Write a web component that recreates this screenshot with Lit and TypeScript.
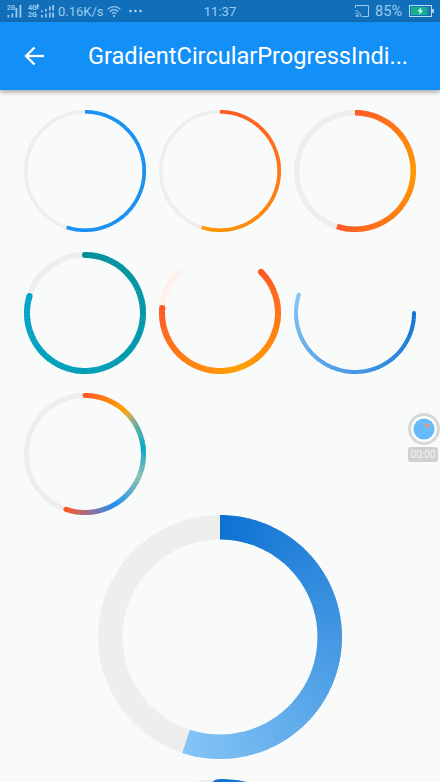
import { LitElement, html, css, svg } from "lit";
import { customElement, property } from "lit/decorators.js";

type Stop = [number, string];

function rgb(hex: string): number[] {
  return [1, 3, 5].map((i) => parseInt(hex.slice(i, i + 2), 16));
}

function colorAt(stops: Stop[], angle: number): string {
  if (stops.length === 1) return stops[0][1];
  for (let i = 1; i < stops.length; i++) {
    if (angle <= stops[i][0]) {
      const [a0, c0] = stops[i - 1];
      const [a1, c1] = stops[i];
      const t = a1 === a0 ? 0 : Math.max(0, (angle - a0) / (a1 - a0));
      const p = rgb(c0);
      const q = rgb(c1);
      return `rgb(${p.map((v, k) => Math.round(v + (q[k] - v) * t)).join(",")})`;
    }
  }
  return stops[stops.length - 1][1];
}

function point(c: number, r: number, deg: number): string {
  const a = (deg * Math.PI) / 180;
  return `${(c + r * Math.sin(a)).toFixed(3)} ${(c - r * Math.cos(a)).toFixed(3)}`;
}

function arc(c: number, r: number, a: number, b: number): string {
  const large = b - a > 180 ? 1 : 0;
  return `M${point(c, r, a)}A${r} ${r} 0 ${large} 1 ${point(c, r, b)}`;
}

@customElement("gradient-ring")
export class GradientRing extends LitElement {
  static styles = css`
    :host {
      display: block;
      flex: none;
    }
    svg {
      display: block;
    }
  `;

  @property({ type: Number }) size = 122;
  @property({ type: Number }) stroke = 4;
  @property({ type: Number }) from = 0;
  @property({ type: Number }) to = 198;
  @property({ type: Number }) trackFrom = 0;
  @property({ type: Number }) trackTo = 360;
  @property() trackColor = "#eeefed";
  @property({ type: Boolean }) round = false;
  @property({ attribute: false }) stops: Stop[] = [[0, "#1e90f0"]];

  render() {
    const c = this.size / 2;
    const r = c - this.stroke / 2;
    const step = 1.5;
    const segs = [];
    for (let a = this.from; a < this.to; a += step) {
      const b = Math.min(a + step + 0.4, this.to);
      segs.push(
        svg`<path d=${arc(c, r, a, b)} stroke=${colorAt(this.stops, a + step / 2)} />`
      );
    }
    const cap = this.round ? "round" : "butt";
    const full = this.trackTo - this.trackFrom >= 360;
    return html`<svg
      width=${this.size}
      height=${this.size}
      viewBox="0 0 ${this.size} ${this.size}"
      fill="none"
      stroke-width=${this.stroke}
    >
      ${full
        ? svg`<circle cx=${c} cy=${c} r=${r} stroke=${this.trackColor} />`
        : this.trackColor === "none"
          ? null
          : svg`<path d=${arc(c, r, this.trackFrom, this.trackTo)} stroke=${this.trackColor} stroke-linecap=${cap} />`}
      ${this.round
        ? svg`
            <path d=${arc(c, r, this.from, this.from + 0.5)} stroke=${colorAt(this.stops, this.from)} stroke-linecap="round" />
            <path d=${arc(c, r, this.to - 0.5, this.to)} stroke=${colorAt(this.stops, this.to)} stroke-linecap="round" />`
        : null}
      ${segs}
    </svg>`;
  }
}

const BLUE: Stop[] = [
  [0, "#1890f2"],
  [198, "#1890f2"],
];
const RED_ORANGE: Stop[] = [
  [0, "#ff5722"],
  [198, "#ff9800"],
];
const RED_ORANGE_RED: Stop[] = [
  [0, "#ff5722"],
  [90, "#ff9800"],
  [198, "#ff5722"],
];
const TEAL: Stop[] = [
  [0, "#00909a"],
  [288, "#00a6c9"],
];
const ARC_RED: Stop[] = [
  [45, "#ff5722"],
  [160, "#ffa000"],
  [275, "#ff5722"],
];
const ARC_BLUE: Stop[] = [
  [90, "#0d72d2"],
  [288, "#84c4f6"],
];
const MULTI: Stop[] = [
  [0, "#ff5722"],
  [40, "#ffa000"],
  [48, "#e0a838"],
  [56, "#80b090"],
  [84, "#00a8c8"],
  [112, "#8ec2b4"],
  [150, "#1e8ff0"],
  [174, "#8f6f9a"],
  [199, "#ff5722"],
];
const BIG: Stop[] = [
  [0, "#0e72d2"],
  [198, "#84c4f6"],
];

@customElement("app-root")
export class AppRoot extends LitElement {
  static styles = css`
    :host {
      display: block;
      position: relative;
      width: 440px;
      height: 782px;
      overflow: hidden;
      background: #f9fbfa;
      font-family: Roboto, "Liberation Sans", sans-serif;
    }
    .status {
      height: 22px;
      background: #116fba;
      color: #9ccbee;
      font-size: 13px;
      display: grid;
      grid-template-columns: 1fr auto 1fr;
      align-items: center;
    }
    .left,
    .right {
      display: flex;
      align-items: center;
    }
    .left {
      padding-left: 7px;
    }
    .right {
      justify-content: flex-end;
      padding-right: 6px;
    }
    .left svg,
    .right svg {
      display: block;
      flex: none;
    }
    .speed {
      margin: 0 3px 0 4px;
    }
    .dots {
      margin-left: 8px;
    }
    .pct {
      font-size: 14.5px;
      margin: 0 7px 0 6px;
    }
    .bar {
      height: 68px;
      background: #1390f7;
      display: flex;
      align-items: center;
      box-shadow: 0 2px 5px rgba(0, 0, 0, 0.35);
      position: relative;
    }
    .back {
      display: block;
      flex: none;
      margin-left: 24px;
    }
    .title {
      margin-left: 44px;
      color: #fff;
      font-size: 23.55px;
      white-space: nowrap;
    }
    .rings {
      padding: 20px 0 0 24px;
      display: flex;
      flex-wrap: wrap;
      column-gap: 13px;
      row-gap: 19.5px;
    }
    .big {
      display: flex;
      flex-direction: column;
      align-items: center;
      row-gap: 20px;
    }
    .float {
      position: absolute;
      left: 408px;
      top: 413px;
      width: 32px;
      display: flex;
      flex-direction: column;
      align-items: center;
    }
    .float svg {
      display: block;
    }
    .time {
      margin-top: 2px;
      width: 30px;
      height: 15px;
      line-height: 15px;
      background: #cfd0d0;
      border-radius: 3px;
      color: #f2f3f3;
      font-size: 10px;
      text-align: center;
      transform: translateX(-1px);
    }
  `;

  render() {
    return html`
      <div class="status">
        <div class="left">
          <svg width="15" height="14" viewBox="0 0 15 14" fill="#9ccbee">
            <text x="0" y="6" font-size="6.5" font-family="Roboto, sans-serif" font-weight="700">2G</text>
            <rect x="0.5" y="11" width="1.7" height="2.5" />
            <rect x="4.5" y="9.5" width="1.7" height="4" />
            <rect x="8.5" y="4" width="1.8" height="9.5" />
            <rect x="12.5" y="1" width="1.8" height="12.5" />
          </svg>
          <svg style="margin-left:6px" width="26" height="14" viewBox="0 0 26 14" fill="#9ccbee">
            <text x="0" y="6" font-size="7" font-family="Roboto, sans-serif" font-weight="700">4G</text>
            <text x="0" y="13" font-size="7" font-family="Roboto, sans-serif" font-weight="700">2G</text>
            <rect x="9" y="0" width="1.2" height="5" />
            <rect x="7.9" y="1.6" width="3.4" height="1" />
            <rect x="13" y="11" width="1.7" height="2.5" />
            <rect x="13" y="6.5" width="1.7" height="1.6" />
            <rect x="17" y="9.5" width="1.7" height="4" />
            <rect x="17" y="5" width="1.7" height="2.5" />
            <rect x="21" y="8.5" width="1.7" height="5" />
            <rect x="21" y="2.5" width="1.7" height="4" />
            <rect x="24.3" y="8.5" width="1.7" height="5" />
            <rect x="24.3" y="1" width="1.7" height="5.5" />
          </svg>
          <span class="speed">0.16K/s</span>
          <svg width="14" height="14" viewBox="0 0 14 14" fill="none" stroke="#9ccbee" stroke-width="1.3">
            <path d="M0.7 5.2C4.2 1.8 9.8 1.8 13.3 5.2" />
            <path d="M2.8 7.4C5.2 5.2 8.8 5.2 11.2 7.4" />
            <path d="M4.9 9.5C6.1 8.5 7.9 8.5 9.1 9.5" />
            <circle cx="7" cy="12" r="1.1" fill="#9ccbee" stroke="none" />
          </svg>
          <svg class="dots" width="13" height="4" viewBox="0 0 13 4" fill="#b8daf3">
            <circle cx="1.5" cy="2" r="1.2" />
            <circle cx="6.5" cy="2" r="1.2" />
            <circle cx="11.5" cy="2" r="1.2" />
          </svg>
        </div>
        <div class="clock">11:37</div>
        <div class="right">
          <svg width="14" height="14" viewBox="0 0 14 14" fill="none" stroke="#9ccbee" stroke-width="1">
            <path d="M0.5 4V1.5H13.5V12.5H7.5" />
            <path d="M0.5 6.5A6.5 6.5 0 0 1 6 13" />
            <path d="M0.5 9A4 4 0 0 1 3.7 13" />
            <circle cx="1.5" cy="12" r="1" fill="#9ccbee" stroke="none" />
          </svg>
          <span class="pct">85%</span>
          <svg width="25" height="12" viewBox="0 0 25 12">
            <rect x="0.5" y="0.5" width="22" height="11" fill="none" stroke="#b9dcf5" />
            <rect x="2" y="2" width="19" height="8" fill="#16b08a" />
            <rect x="18" y="2" width="3" height="8" fill="#1a7fb8" />
            <rect x="23" y="4" width="2" height="4" fill="#9ccbee" />
            <path d="M12.5 2L8.5 6.5H11L10 10L14 5.5H11.5Z" fill="#e6fff5" />
          </svg>
        </div>
      </div>
      <div class="bar">
        <svg class="back" width="20" height="20" viewBox="0 0 20 20" fill="none" stroke="#fff" stroke-width="2.3">
          <path d="M20 10H2" />
          <path d="M10.5 1.5L2 10L10.5 18.5" />
        </svg>
        <div class="title">GradientCircularProgressIndi...</div>
      </div>
      <div class="rings">
        <gradient-ring .stroke=${3.6} .stops=${BLUE}></gradient-ring>
        <gradient-ring .stroke=${3.6} .stops=${RED_ORANGE}></gradient-ring>
        <gradient-ring .stroke=${5.5} .stops=${RED_ORANGE_RED}></gradient-ring>
        <gradient-ring .stroke=${6} .to=${287} .round=${true} .stops=${TEAL}></gradient-ring>
        <gradient-ring
          .stroke=${6}
          .from=${45}
          .to=${275}
          .trackFrom=${45}
          .trackTo=${315}
          trackColor="#fff0eb"
          .round=${true}
          .stops=${ARC_RED}
        ></gradient-ring>
        <gradient-ring
          .stroke=${4}
          .from=${90}
          .to=${288}
          .trackFrom=${90}
          .trackTo=${288}
          trackColor="none"
          .round=${true}
          .stops=${ARC_BLUE}
        ></gradient-ring>
        <gradient-ring .stroke=${5} .to=${199} .round=${true} .stops=${MULTI}></gradient-ring>
      </div>
      <div class="big">
        <gradient-ring .size=${244} .stroke=${24.5} .stops=${BIG}></gradient-ring>
        <gradient-ring .size=${244} .stroke=${24} .to=${198} .round=${true} .stops=${BIG}></gradient-ring>
      </div>
      <div class="float">
        <svg width="32" height="32" viewBox="0 0 32 32">
          <circle cx="16" cy="16" r="14.5" fill="#fbfcfc" stroke="#d6d7d7" stroke-width="3" />
          <circle cx="16" cy="16" r="10.5" fill="#68bafa" />
          <circle cx="19.5" cy="12.5" r="2.2" fill="#e59a80" />
        </svg>
        <div class="time">00:00</div>
      </div>
    `;
  }
}
